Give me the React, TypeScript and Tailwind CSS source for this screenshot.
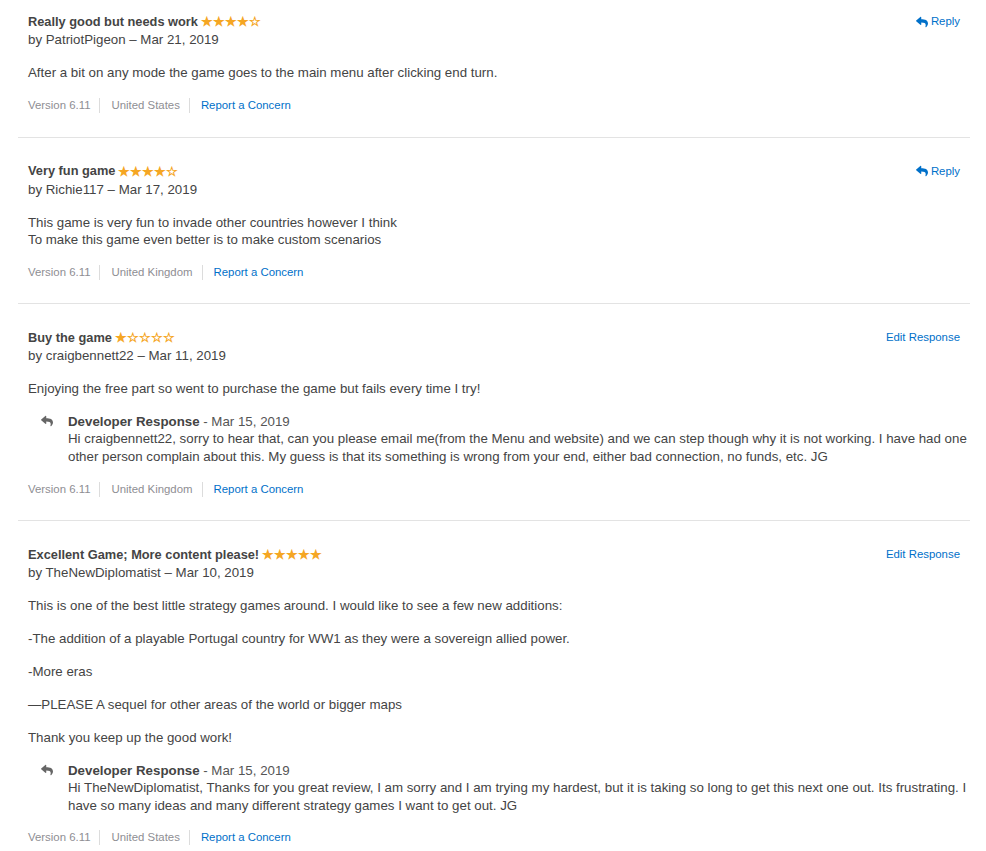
import React from "react";
import { FaReply } from "react-icons/fa";

const font = { fontFamily: '"Liberation Sans", Arial, sans-serif' };

function Stars({ n }: { n: number }) {
  return (
    <span className="ml-[3px] inline-flex text-[13px] leading-none text-[#f5a623]">
      {[0, 1, 2, 3, 4].map((i) => (
        <span key={i}>{i < n ? "★" : "☆"}</span>
      ))}
    </span>
  );
}

function Meta({ country }: { country: string }) {
  return (
    <div className="mt-[14.5px] flex h-[18px] items-center text-[11.4px] text-[#8e8e93]">
      <span>Version 6.11</span>
      <span className="ml-[9px] mr-[11px] h-[15px] w-px bg-[#dcdcdc]" />
      <span>{country}</span>
      <span className="ml-[9px] mr-[11px] h-[15px] w-px bg-[#dcdcdc]" />
      <span className="text-[#0070c9]">Report a Concern</span>
    </div>
  );
}

function DevResponse({ lines }: { lines: string[] }) {
  return (
    <div className="mt-[15.5px] flex">
      <div className="w-[40px] shrink-0 pl-[13px] pt-[2px]">
        <FaReply className="h-[12px] w-[12px] text-[#666]" />
      </div>
      <div className="text-[13.3px] leading-[17.6px] text-[#444]">
        <div>
          <span className="font-semibold text-[#444]">Developer Response</span>
          <span className="text-[#555]"> - Mar 15, 2019</span>
        </div>
        {lines.map((l, i) => (
          <div key={i} className="whitespace-nowrap">
            {l}
          </div>
        ))}
      </div>
    </div>
  );
}

type Review = {
  title: string;
  stars: number;
  by: string;
  action: "reply" | "edit";
  body: string[][];
  dev?: string[];
  country: string;
};

const reviews: Review[] = [
  {
    title: "Really good but needs work",
    stars: 4,
    by: "by PatriotPigeon – Mar 21, 2019",
    action: "reply",
    body: [["After a bit on any mode the game goes to the main menu after clicking end turn."]],
    country: "United States",
  },
  {
    title: "Very fun game",
    stars: 4,
    by: "by Richie117 – Mar 17, 2019",
    action: "reply",
    body: [
      [
        "This game is very fun to invade other countries however I think",
        "To make this game even better is to make custom scenarios",
      ],
    ],
    country: "United Kingdom",
  },
  {
    title: "Buy the game",
    stars: 1,
    by: "by craigbennett22 – Mar 11, 2019",
    action: "edit",
    body: [["Enjoying the free part so went to purchase the game but fails every time I try!"]],
    dev: [
      "Hi craigbennett22, sorry to hear that, can you please email me(from the Menu and website) and we can step though why it is not working. I have had one",
      "other person complain about this. My guess is that its something is wrong from your end, either bad connection, no funds, etc. JG",
    ],
    country: "United Kingdom",
  },
  {
    title: "Excellent Game; More content please!",
    stars: 5,
    by: "by TheNewDiplomatist – Mar 10, 2019",
    action: "edit",
    body: [
      ["This is one of the best little strategy games around. I would like to see a few new additions:"],
      ["-The addition of a playable Portugal country for WW1 as they were a sovereign allied power."],
      ["-More eras"],
      ["—PLEASE A sequel for other areas of the world or bigger maps"],
      ["Thank you keep up the good work!"],
    ],
    dev: [
      "Hi TheNewDiplomatist, Thanks for you great review, I am sorry and I am trying my hardest, but it is taking so long to get this next one out. Its frustrating. I",
      "have so many ideas and many different strategy games I want to get out. JG",
    ],
    country: "United States",
  },
];

function ReviewItem({ r, first, last }: { r: Review; first: boolean; last: boolean }) {
  return (
    <div
      className={`${last ? "" : "border-b border-[#e3e3e3]"} ${first ? "pt-[12px]" : "pt-[23.5px]"} ${
        last ? "pb-[4px]" : first ? "pb-[23px]" : "pb-[22px]"
      }`}
    >
      <div className="px-[10px]">
        <div className="flex items-start justify-between">
          <div>
            <div className="flex h-[19px] items-center text-[12.8px] font-bold text-[#444]">
              <span>{r.title}</span>
              <Stars n={r.stars} />
            </div>
            <div className="text-[13.3px] leading-[17.6px] text-[#444]">{r.by}</div>
          </div>
          <div className="flex h-[19px] items-center text-[11.4px] text-[#0070c9]">
            {r.action === "reply" ? (
              <>
                <FaReply className="mr-[3px] h-[12px] w-[12px]" />
                <span>Reply</span>
              </>
            ) : (
              <span>Edit Response</span>
            )}
          </div>
        </div>
        {r.body.map((p, i) => (
          <div key={i} className="mt-[15.4px] text-[13.3px] leading-[17.6px] text-[#444]">
            {p.map((l, j) => (
              <div key={j}>{l}</div>
            ))}
          </div>
        ))}
        {r.dev && <DevResponse lines={r.dev} />}
        <Meta country={r.country} />
      </div>
    </div>
  );
}

export default function App() {
  return (
    <div className="h-[851px] w-[986px] overflow-hidden bg-white" style={font}>
      <div className="border-b-2 border-[#9a9a9a]">
        <div className="pl-[18px] pr-[16px]">
          {reviews.map((r, i) => (
            <ReviewItem key={i} r={r} first={i === 0} last={i === reviews.length - 1} />
          ))}
        </div>
      </div>
    </div>
  );
}
